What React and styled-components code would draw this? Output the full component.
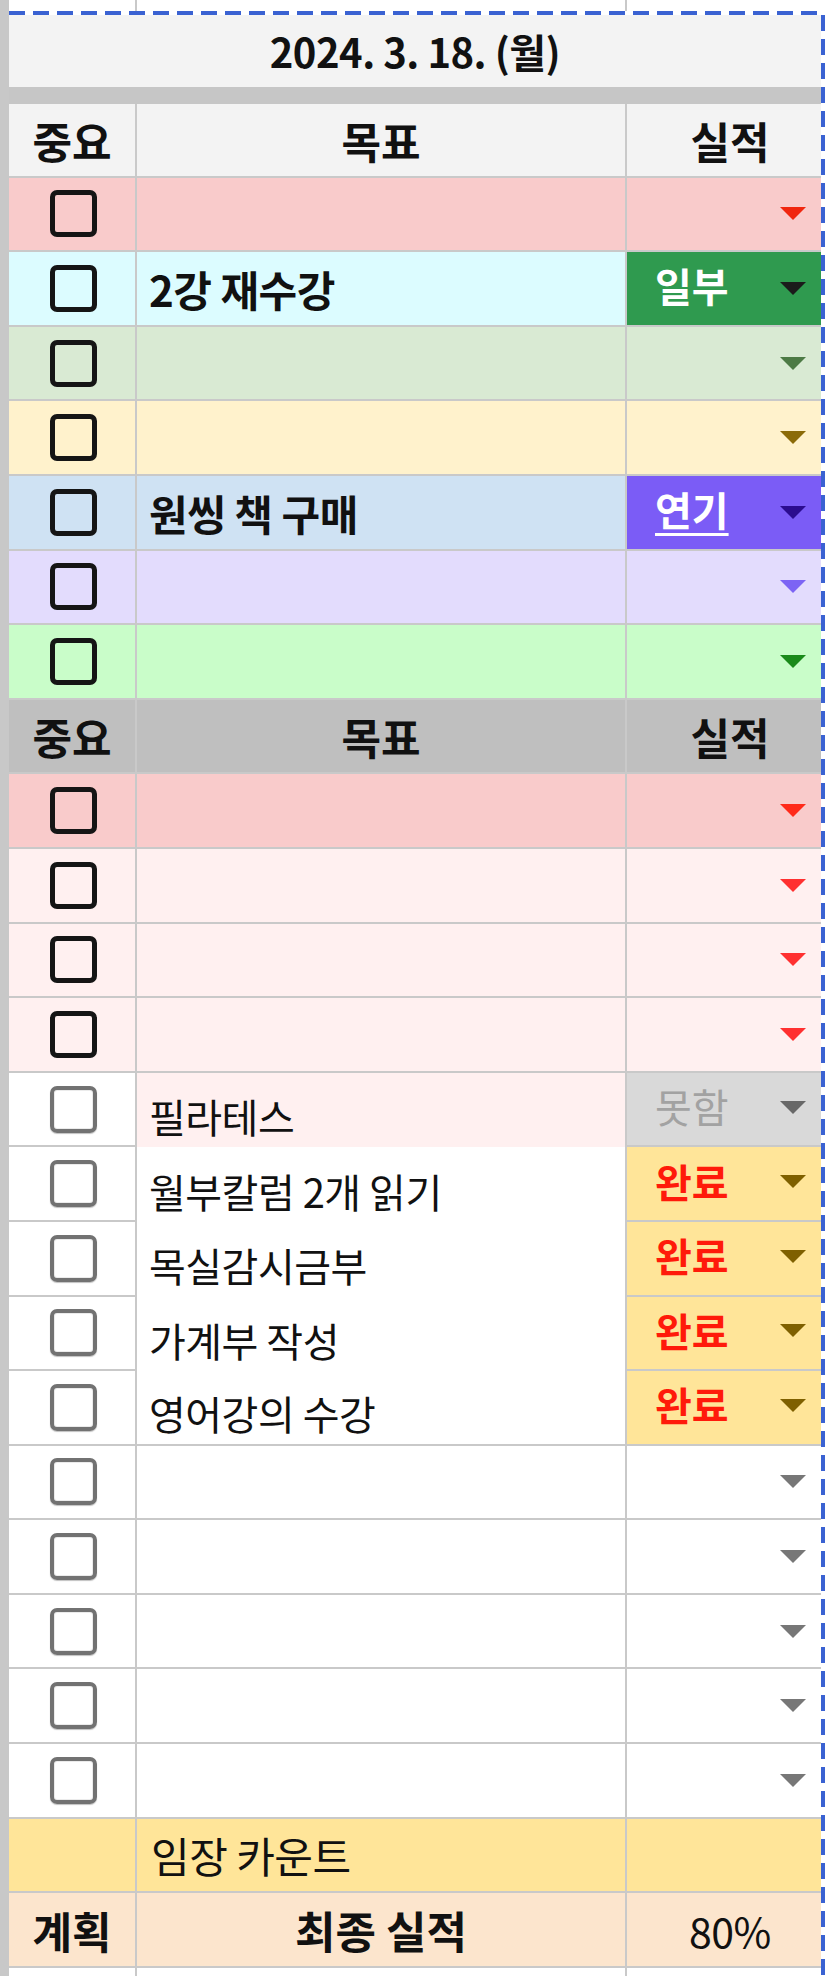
import styled, { createGlobalStyle } from "styled-components";

const GlobalStyle = createGlobalStyle`
  html, body {
    margin: 0;
    padding: 0;
    background: #ffffff;
  }
  body {
    font-family: "Noto Sans CJK KR", "Noto Sans", sans-serif;
    color: #111111;
  }
`;

const LINE = "#c9c9c9";
const ROW_H = "74.6px";

const Page = styled.div`
  display: flex;
  width: 827px;
  height: 1976px;
  overflow: hidden;
  background: #ffffff;
`;

const RowHeaderStrip = styled.div`
  flex: none;
  width: 9px;
  background: #c8c8c8;
`;

const Main = styled.div`
  display: flex;
  flex-direction: column;
  width: 818px;
`;

const Grid = styled.div`
  display: grid;
  grid-template-columns: 128px 490px 194px;
  width: 812px;
`;

const Selection = styled.div`
  display: grid;
  grid-template-columns: 812px 4px;
  grid-template-rows: 4px auto;
`;

const DashTop = styled.div`
  grid-column: 1 / 3;
  background: repeating-linear-gradient(90deg, #3a62d2 0 16px, transparent 16px 24px);
`;

const DashRight = styled.div`
  background: repeating-linear-gradient(180deg, #3a62d2 0 16px, transparent 16px 24px);
`;

const Cell = styled.div`
  box-sizing: border-box;
  height: ${(p) => p.$h || ROW_H};
  background: ${(p) => p.$bg || "#ffffff"};
  border-right: ${(p) => (p.$last ? "none" : `2px solid ${LINE}`)};
  border-bottom: ${(p) => (p.$open ? "none" : `2px solid ${LINE}`)};
  display: flex;
  align-items: center;
  justify-content: ${(p) => p.$justify || "flex-start"};
  padding: ${(p) => p.$pad || "0"};
  overflow: hidden;
  white-space: nowrap;
`;

const DateBar = styled.div`
  grid-column: 1 / -1;
  height: 72px;
  background: #f3f3f3;
  display: flex;
  align-items: center;
  justify-content: center;
  font-size: 40px;
  font-weight: 700;
  letter-spacing: -0.5px;
`;

const Divider = styled.div`
  grid-column: 1 / -1;
  height: 17px;
  background: #c6c6c6;
`;

const HeadText = styled.span`
  font-size: ${(p) => p.$size || "43px"};
  font-weight: 700;
  color: #111111;
`;

const Box = styled.span`
  box-sizing: border-box;
  width: 47px;
  height: 47px;
  margin-left: 3px;
  border-radius: 7px;
  border: ${(p) => (p.$muted ? "4px solid #727272" : "5px solid #151515")};
  box-shadow: ${(p) =>
    p.$muted ? "0 1px 1px rgba(0,0,0,0.25), inset 0 0 0 1px rgba(0,0,0,0.08)" : "none"};
`;

const Goal = styled.span`
  font-size: ${(p) => p.$size || (p.$bold ? "42px" : "40px")};
  font-weight: ${(p) => (p.$bold ? 700 : 400)};
  color: #111111;
  padding-top: ${(p) => (p.$drop ? "12px" : "0")};
  letter-spacing: -0.5px;
`;

const Status = styled.span`
  font-size: 40px;
  font-weight: ${(p) => p.$weight || 700};
  color: ${(p) => p.$color};
  margin-top: -6px;
  text-decoration: ${(p) => (p.$underline ? "underline" : "none")};
  text-decoration-thickness: 3px;
  text-underline-offset: 7px;
`;

const Caret = styled.span`
  width: 0;
  height: 0;
  margin-left: auto;
  margin-top: ${(p) => (p.$raise ? "-4px" : "0")};
  border-left: 13px solid transparent;
  border-right: 13px solid transparent;
  border-top: 13px solid ${(p) => p.$color};
`;

const DONE = { label: "완료", bg: "#ffe599", color: "#ff1a0a", caret: "#7f6000" };

const topRows = [
  { bg: "#f9cbcb", caret: "#f0260f" },
  {
    bg: "#dcfcff",
    goal: "2강 재수강",
    status: { label: "일부", bg: "#2f9a4f", color: "#ffffff", caret: "#1b1b1b" },
  },
  { bg: "#d9ead3", caret: "#4d7a45" },
  { bg: "#fff2cc", caret: "#8b6b08" },
  {
    bg: "#cfe2f3",
    goal: "원씽 책 구매",
    status: { label: "연기", bg: "#7b5cf6", color: "#ffffff", caret: "#2b0c8f", underline: true },
  },
  { bg: "#e3dcfd", caret: "#7c64f4" },
  { bg: "#c9fdc9", caret: "#1a8a1a" },
];

const plain = { checkBg: "#ffffff", bg: "#ffffff", muted: true, caret: "#777777" };

const bottomRows = [
  { bg: "#f9cbcb", caret: "#ff2a1a" },
  { bg: "#fff0f0", caret: "#ff3030" },
  { bg: "#fff0f0", caret: "#ff3030" },
  { bg: "#fff0f0", caret: "#ff3030" },
  {
    ...plain,
    bg: "#fff0f0",
    goal: "필라테스",
    open: true,
    status: { label: "못함", bg: "#d9d9d9", color: "#a2a2a2", weight: 400, caret: "#686868" },
  },
  { ...plain, goal: "월부칼럼 2개 읽기", open: true, status: DONE },
  { ...plain, goal: "목실감시금부", open: true, status: DONE },
  { ...plain, goal: "가계부 작성", open: true, status: DONE },
  { ...plain, goal: "영어강의 수강", status: DONE },
  plain,
  plain,
  plain,
  plain,
  plain,
];

const HeaderRow = ({ bg, h }) => (
  <>
    <Cell $bg={bg} $h={h} $justify="center">
      <HeadText>중요</HeadText>
    </Cell>
    <Cell $bg={bg} $h={h} $justify="center">
      <HeadText>목표</HeadText>
    </Cell>
    <Cell $bg={bg} $h={h} $justify="center" $pad="0 0 0 12px" $last>
      <HeadText>실적</HeadText>
    </Cell>
  </>
);

const TaskRow = ({ row, bold }) => {
  const s = row.status;
  return (
    <>
      <Cell $bg={row.checkBg || row.bg} $justify="center">
        <Box $muted={row.muted} />
      </Cell>
      <Cell $bg={row.bg} $open={row.open} $pad="0 0 0 12px">
        {row.goal && (
          <Goal $bold={bold} $drop={!bold}>
            {row.goal}
          </Goal>
        )}
      </Cell>
      <Cell $bg={s ? s.bg : row.bg} $pad="0 15px 0 28px" $last>
        {s && (
          <Status $color={s.color} $weight={s.weight} $underline={s.underline}>
            {s.label}
          </Status>
        )}
        <Caret $color={s ? s.caret : row.caret} $raise={!!s && !bold} />
      </Cell>
    </>
  );
};

const Spacer = ({ h }) => (
  <>
    <Cell $h={h} $open />
    <Cell $h={h} $open />
    <Cell $h={h} $open $last />
  </>
);

export default function App() {
  return (
    <>
      <GlobalStyle />
      <Page>
        <RowHeaderStrip />
        <Main>
          <Grid>
            <Spacer h="11px" />
          </Grid>
          <Selection>
            <DashTop />
            <Grid>
              <DateBar>2024. 3. 18. (월)</DateBar>
              <Divider />
              <HeaderRow bg="#f3f3f3" h="73.6px" />
              {topRows.map((row, i) => (
                <TaskRow key={`t${i}`} row={row} bold />
              ))}
              <HeaderRow bg="#bfbfbf" />
              {bottomRows.map((row, i) => (
                <TaskRow key={`b${i}`} row={row} />
              ))}
              <Cell $bg="#ffe599" />
              <Cell $bg="#ffe599" $pad="0 0 0 14px">
                <Goal $size="42px">임장 카운트</Goal>
              </Cell>
              <Cell $bg="#ffe599" $last />
              <Cell $bg="#fce5cd" $justify="center">
                <HeadText>계획</HeadText>
              </Cell>
              <Cell $bg="#fce5cd" $justify="center">
                <HeadText $size="44px">최종 실적</HeadText>
              </Cell>
              <Cell $bg="#fce5cd" $justify="center" $pad="0 0 0 12px" $last>
                <Goal $size="41px">80%</Goal>
              </Cell>
              <Spacer h="8px" />
            </Grid>
            <DashRight />
          </Selection>
        </Main>
      </Page>
    </>
  );
}
